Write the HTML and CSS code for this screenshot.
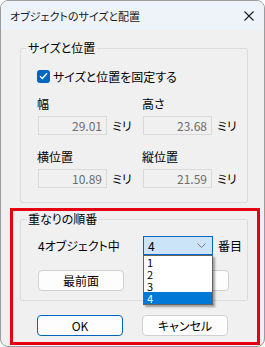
FILE: index.html
```html
<!DOCTYPE html>
<html lang="ja">
<head>
    <meta charset="UTF-8">
    <title>オブジェクトのサイズと配置</title>
    <link rel="stylesheet" href="styles.css">
</head>
<body>
    <div class="window">
        <div class="titlebar">
            <span class="title">オブジェクトのサイズと配置</span>
            <svg class="close" width="10" height="10" viewBox="0 0 10 10">
                <path d="M0.5 0.5 L9.5 9.5 M9.5 0.5 L0.5 9.5" stroke="#1a1a1a" stroke-width="1.1" fill="none"/>
            </svg>
        </div>

        <div class="content">
            <!-- Size and position -->
            <fieldset class="group group-size">
                <legend>サイズと位置</legend>
                <label class="check">
                    <span class="box">
                        <svg width="9" height="8" viewBox="0 0 9 8">
                            <path d="M1 4.2 L3.4 6.5 L8 1.2" stroke="#fff" stroke-width="1.3" fill="none"/>
                        </svg>
                    </span>
                    サイズと位置を固定する
                </label>
                <div class="fields">
                    <div class="field">
                        <div class="field-label">幅</div>
                        <div class="field-row"><div class="input">29.01</div><span class="unit">ミリ</span></div>
                    </div>
                    <div class="field">
                        <div class="field-label">高さ</div>
                        <div class="field-row"><div class="input">23.68</div><span class="unit">ミリ</span></div>
                    </div>
                    <div class="field">
                        <div class="field-label">横位置</div>
                        <div class="field-row"><div class="input">10.89</div><span class="unit">ミリ</span></div>
                    </div>
                    <div class="field">
                        <div class="field-label">縦位置</div>
                        <div class="field-row"><div class="input">21.59</div><span class="unit">ミリ</span></div>
                    </div>
                </div>
            </fieldset>

            <!-- Highlighted area -->
            <div class="highlight">
                <fieldset class="group group-order">
                    <legend>重なりの順番</legend>
                    <div class="order-row">
                        <span class="order-label">4オブジェクト中</span>
                        <div class="combo-wrap">
                            <div class="combo">
                                <span>4</span>
                                <svg width="9" height="5" viewBox="0 0 9 5">
                                    <path d="M0.5 0.5 L4.5 4.5 L8.5 0.5" stroke="#7a7a7a" stroke-width="1" fill="none"/>
                                </svg>
                            </div>
                            <ul class="dropdown">
                                <li>1</li>
                                <li>2</li>
                                <li>3</li>
                                <li class="selected">4</li>
                            </ul>
                        </div>
                        <span class="unit">番目</span>
                    </div>
                    <div class="button-row">
                        <button class="btn">最前面</button>
                        <button class="btn">最背面</button>
                    </div>
                </fieldset>

                <div class="button-row actions">
                    <button class="btn btn-default">OK</button>
                    <button class="btn">キャンセル</button>
                </div>
            </div>
        </div>
    </div>
</body>
</html>
```

FILE: styles.css
```css
body {
    margin: 0;
    padding: 0;
    background: #ffffff;
    font-family: "Noto Sans CJK JP", "Noto Sans", sans-serif;
    font-size: 12px;
    font-feature-settings: "palt";
    color: #000;
}

.window {
    width: 265px;
    height: 347px;
    box-sizing: border-box;
    border: 1px solid #9c9c9c;
    border-radius: 8px;
    background: #f0f0f0;
    overflow: hidden;
    display: flex;
    flex-direction: column;
}

.titlebar {
    height: 29px;
    background: #eef3f9;
    display: flex;
    align-items: center;
    justify-content: space-between;
    padding: 0 10px 0 9px;
    flex-shrink: 0;
}

.title {
    font-size: 11px;
    line-height: 16px;
    color: #1a1a1a;
}

.content {
    padding-top: 10px;
}

.group {
    margin: 0 0 0 19px;
    width: 228px;
    box-sizing: border-box;
    padding: 0 0 0 16px;
    border: 1px solid #dcdcdc;
    border-radius: 2px;
}

.group legend {
    padding: 0 2px;
    margin-left: -11px;
    line-height: 16px;
    font-size: 12px;
}

.group-size {
    height: 163px;
}

.check {
    display: flex;
    align-items: center;
    gap: 3px;
    margin-top: 12px;
    height: 16px;
}

.box {
    width: 13px;
    height: 13px;
    border-radius: 3px;
    background: #0067c0;
    display: flex;
    align-items: center;
    justify-content: center;
}

.fields {
    display: grid;
    grid-template-columns: 105px 105px;
    row-gap: 14px;
    margin-top: 12px;
}

.field-label {
    line-height: 16px;
    height: 16px;
}

.field-row {
    display: flex;
    align-items: center;
    margin-top: 4px;
}

.input {
    width: 69px;
    height: 19px;
    box-sizing: border-box;
    border: 1px solid #dadada;
    background: #f0f0f0;
    color: #6d6d6d;
    text-align: right;
    padding-right: 4px;
    line-height: 17px;
    margin-left: 1px;
}

.unit {
    margin-left: 5px;
    line-height: 16px;
}

.highlight {
    margin: 5px 0 0 9px;
    width: 250px;
    height: 137px;
    box-sizing: border-box;
    border: 3px solid #e60012;
}

.group-order {
    margin-left: 7px;
    height: 90px;
}

.order-row {
    display: flex;
    align-items: center;
    margin-top: 9px;
    height: 19px;
}

.order-label {
    width: 105px;
    padding-left: 1px;
}

.combo-wrap {
    position: relative;
}

.combo {
    width: 70px;
    height: 19px;
    box-sizing: border-box;
    border: 1px solid #0067c0;
    background: #cce4f7;
    display: flex;
    align-items: center;
    justify-content: space-between;
    padding: 0 6px 0 4px;
}

.dropdown {
    position: absolute;
    top: 19px;
    left: 0;
    width: 70px;
    box-sizing: border-box;
    margin: 0;
    padding: 0;
    list-style: none;
    background: #fff;
    border: 1px solid #646464;
    box-shadow: 2px 2px 2px rgba(0, 0, 0, 0.35);
    z-index: 2;
}

.dropdown li {
    height: 12px;
    line-height: 12px;
    font-size: 11px;
    padding-left: 3px;
}

.dropdown li.selected {
    background: #0078d7;
    color: #fff;
}

.button-row {
    display: flex;
    gap: 19px;
    margin-top: 15px;
    margin-left: 1px;
}

.btn {
    width: 86px;
    height: 21px;
    box-sizing: border-box;
    border: 1px solid #d0d0d0;
    border-radius: 4px;
    background: #fdfdfd;
    font-family: inherit;
    font-size: 12px;
    font-feature-settings: "palt";
    padding: 0;
    color: #000;
}

.btn-default {
    border-color: #0067c0;
}

.actions {
    margin-left: 24px;
    margin-top: 14px;
}
```
